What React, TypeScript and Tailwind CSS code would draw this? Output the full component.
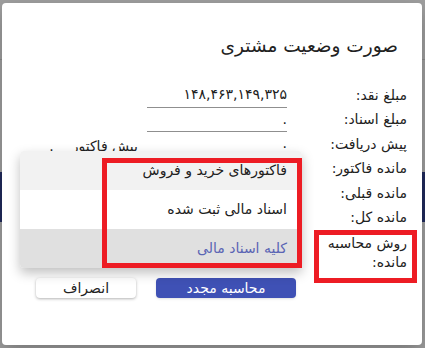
import React from 'react';

const rows = [
    { label: 'مبلغ نقد:', value: '۱۴۸,۴۶۳,۱۴۹,۳۲۵', line: true },
    { label: 'مبلغ اسناد:', value: '.', line: true },
    { label: 'پیش دریافت:', value: '.', line: true, extra: true },
    { label: 'مانده فاکتور:', value: '', line: false },
    { label: 'مانده قبلی:', value: '', line: false },
    { label: 'مانده کل:', value: '', line: false },
];

const menuItems = [
    { text: 'فاکتورهای خرید و فروش', cls: 'bg-[#f2f2f2] text-[#212121]' },
    { text: 'اسناد مالی ثبت شده', cls: 'bg-white text-[#212121]' },
    { text: 'کلیه اسناد مالی', cls: 'bg-[#e0e0e0] text-[#5a64b4]' },
];

export default function App() {
    return (
        <div
            className="relative w-[425px] h-[348px] overflow-hidden bg-[#9f9f9f]"
            style={{ fontFamily: '"DejaVu Sans", sans-serif' }}
        >
            {/* page behind the backdrop */}
            <div className="flex flex-col">
                <div className="h-[60px] border-b border-[#8c8c8c]" />
                <div className="h-[112px]" />
                <div className="h-[50px] bg-[#202a5c]" />
            </div>

            {/* dialog */}
            <div
                dir="rtl"
                className="absolute left-[2px] top-[3px] w-[420px] h-[342px] bg-white rounded-[4px] shadow-[0_8px_20px_rgba(0,0,0,0.25)] pr-[15px]"
            >
                <h2 className="pt-[30px] pr-[9px] h-[80px] text-[18.5px] leading-[26px] text-[#212121] font-normal">
                    صورت وضعیت مشتری
                </h2>

                <div className="flex flex-col text-[14px] text-[#212121]">
                    {rows.map((r) => (
                        <div key={r.label} className="flex h-[24.5px] items-center whitespace-nowrap">
                            <div className="w-[120px] shrink-0">{r.label}</div>
                            <div
                                className={`w-[140px] shrink-0 h-full flex items-center ${r.line ? 'border-b border-[#8f8f8f]' : ''}`}
                            >
                                {r.value}
                            </div>
                            {r.extra && (
                                <div className="flex items-center gap-[18px] mr-[9px] pt-[4px]">
                                    <span>پیش فاکتور</span>
                                    <span>.</span>
                                </div>
                            )}
                        </div>
                    ))}
                    <div className="w-[100px] pt-[4px] leading-[19px]">
                        روش محاسبه
                        <br />
                        مانده:
                    </div>
                </div>

                <div className="flex gap-[20px] mr-[111px] mt-[6px]">
                    <button className="w-[140px] h-[20px] rounded-[4px] bg-[#3f51b5] text-white text-[14px] leading-[20px] shadow-sm">
                        محاسبه مجدد
                    </button>
                    <button className="w-[100px] h-[20px] rounded-[4px] bg-white text-[#212121] text-[14px] leading-[20px] shadow-[0_1px_3px_rgba(0,0,0,0.3)]">
                        انصراف
                    </button>
                </div>
            </div>

            {/* open select menu */}
            <div
                dir="rtl"
                className="absolute left-[20px] top-[151px] w-[282px] rounded-[4px] overflow-hidden bg-white shadow-[0_5px_12px_rgba(0,0,0,0.25)] text-[14px]"
            >
                {menuItems.map((m) => (
                    <div key={m.text} className={`h-[39px] flex items-center pr-[15px] ${m.cls}`}>
                        {m.text}
                    </div>
                ))}
            </div>

            {/* highlight boxes */}
            <div className="absolute left-[102px] top-[158px] w-[200px] h-[110px] border-[5px] border-[#ed1c24]" />
            <div className="absolute left-[314px] top-[230px] w-[103px] h-[53px] border-[5px] border-[#ed1c24]" />
        </div>
    );
}
